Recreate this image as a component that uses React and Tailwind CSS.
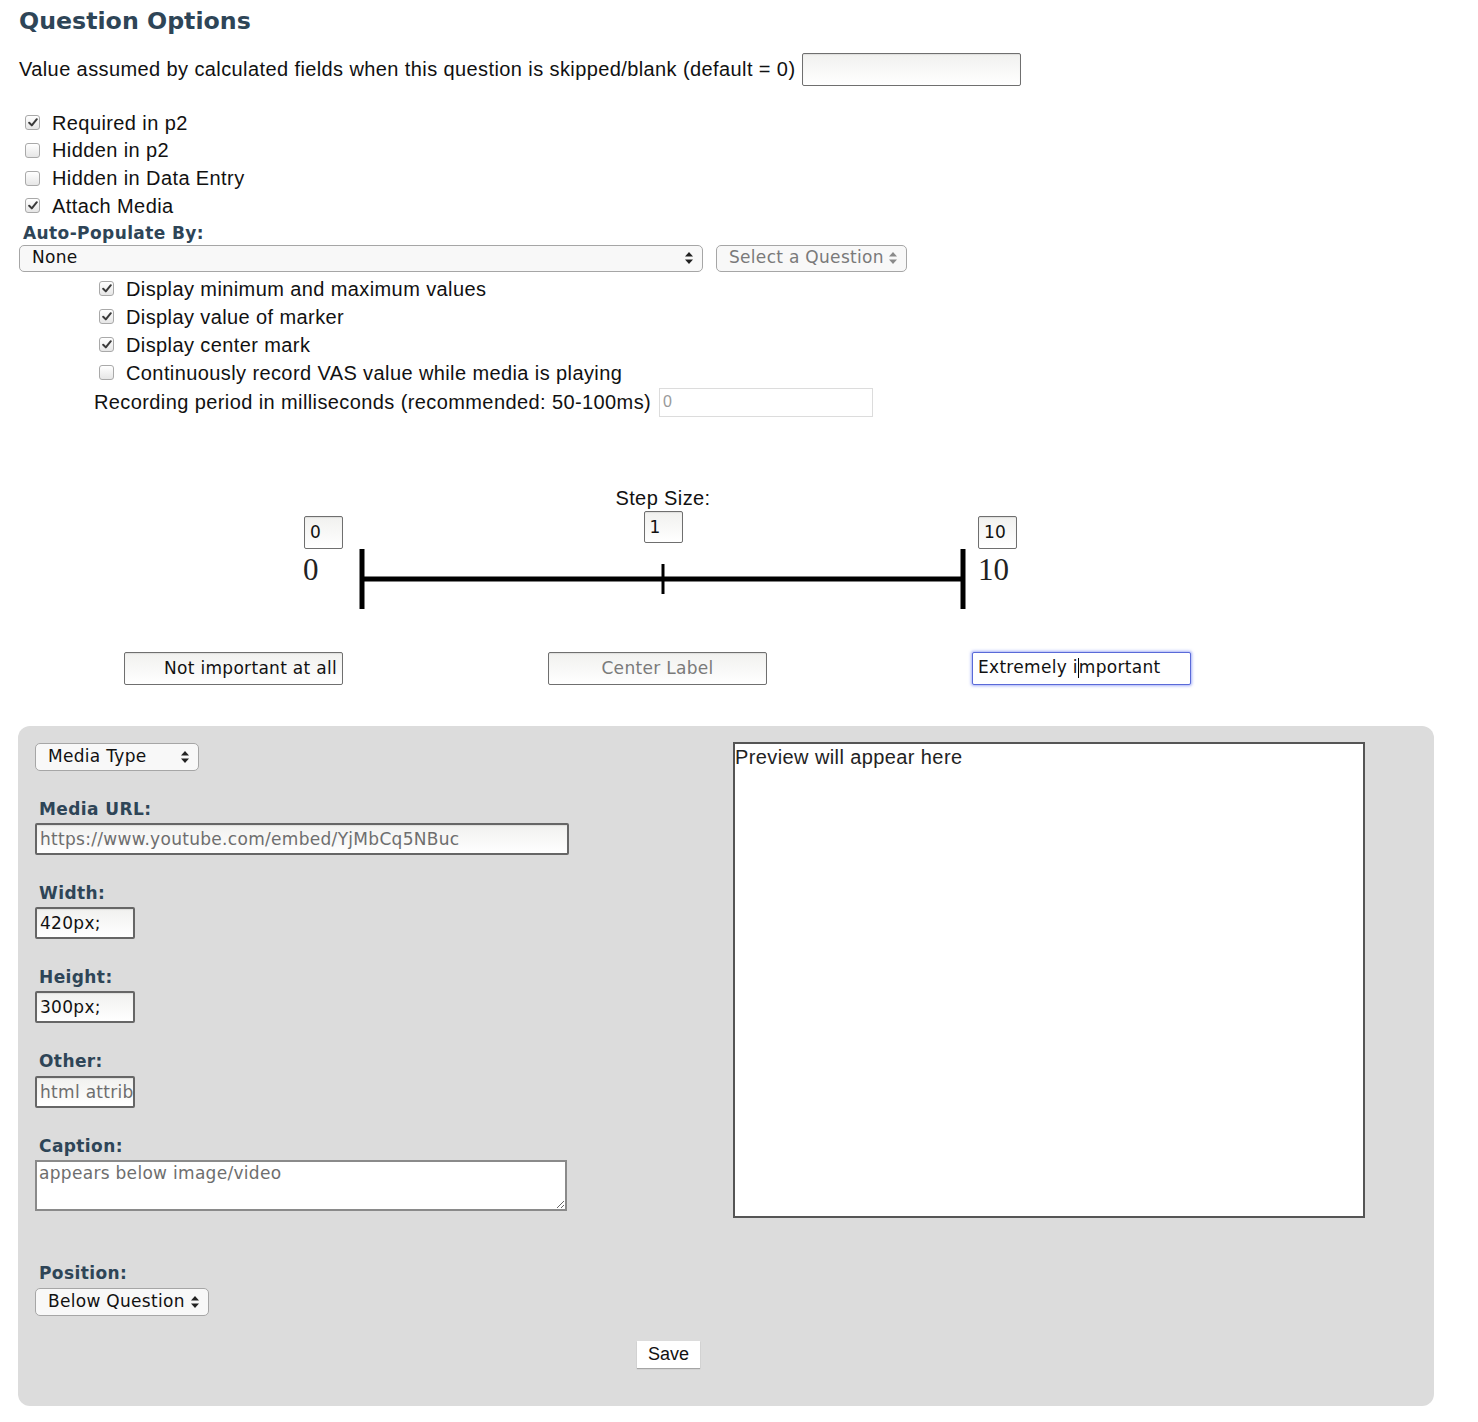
import React from "react";

const sans = "font-['Liberation_Sans',Arial,sans-serif] tracking-[0.4px]";
const ui = "font-['DejaVu_Sans',Verdana,sans-serif] text-[17px] tracking-[0.3px]";
const labelCls = "font-['DejaVu_Sans',Verdana,sans-serif] font-bold text-[17px] tracking-[0.4px] leading-[20px] text-[#2e4557]";

function Check({ on }) {
  return (
    <span className="w-[15px] h-[15px] shrink-0 rounded-[3px] border border-[#a9a9a9] bg-gradient-to-b from-white to-[#e6e6e6] flex items-center justify-center">
      {on && (
        <svg width="10" height="9" viewBox="0 0 10 9">
          <path d="M1.2 4.8 L3.8 7.4 L8.8 1.2" fill="none" stroke="#3a3a3a" strokeWidth="2" strokeLinecap="round" strokeLinejoin="round" />
        </svg>
      )}
    </span>
  );
}

function CheckRow({ on, tall = false, children }) {
  return (
    <div className={`${tall ? "h-[28px]" : "h-[27.67px]"} flex items-center gap-[12px]`}>
      <Check on={on} />
      <span className={`${sans} text-[20px] text-[#111]`}>{children}</span>
    </div>
  );
}

function Arrows({ color = "#222" }) {
  return (
    <svg width="8" height="14" viewBox="0 0 8 14" className="shrink-0">
      <path d="M0 5.5 L4 1 L8 5.5 Z" fill={color} />
      <path d="M0 8.5 L4 13 L8 8.5 Z" fill={color} />
    </svg>
  );
}

function Select({ value, className = "", muted = false }) {
  return (
    <div
      className={`flex items-center justify-between rounded-[5px] border border-[#a6a6a6] bg-[#f8f8f8] pl-[12px] pr-[9px] ${ui} ${muted ? "text-[#7a7a7a]" : "text-[#111]"} ${className}`}
    >
      <span>{value}</span>
      <Arrows color={muted ? "#8a8a8a" : "#222"} />
    </div>
  );
}

const boxCls =
  "border border-[#6f6f6f] rounded-[2px] bg-gradient-to-b from-[#f1f1ef] to-white shadow-[inset_0_1px_1px_rgba(0,0,0,0.08)] outline-none";
const numeral = "font-['Liberation_Serif','Times_New_Roman',serif] text-[31px] leading-[33px] text-[#222]";

export default function App() {
  return (
    <div className="bg-white min-h-[1422px] pl-[18px] pt-[4px] text-[#111]">
      <h2 className="font-['DejaVu_Sans',Verdana,sans-serif] font-bold text-[23.7px] leading-[34px] text-[#2e4557] ml-[1px]">
        Question Options
      </h2>

      <div className="mt-[15px] ml-[1px] flex items-center h-[32px]">
        <span className={`${sans} text-[20px]`}>
          Value assumed by calculated fields when this question is skipped/blank (default = 0)
        </span>
        <input readOnly className={`${boxCls} ml-[7px] w-[219px] h-[33px]`} />
      </div>

      <div className="mt-[24px] ml-[7px]">
        <CheckRow on>Required in p2</CheckRow>
        <CheckRow>Hidden in p2</CheckRow>
        <CheckRow>Hidden in Data Entry</CheckRow>
        <CheckRow on>Attach Media</CheckRow>
      </div>

      <div className={`${labelCls} mt-[3px] ml-[5px]`}>Auto-Populate By:</div>

      <div className="mt-[2px] ml-[1px] flex gap-[13px]">
        <Select value="None" className="w-[684px] h-[27px]" />
        <Select value="Select a Question" muted className="w-[191px] h-[27px]" />
      </div>

      <div className="mt-[3px] ml-[81px]">
        <CheckRow on tall>Display minimum and maximum values</CheckRow>
        <CheckRow on tall>Display value of marker</CheckRow>
        <CheckRow on tall>Display center mark</CheckRow>
        <CheckRow tall>Continuously record VAS value while media is playing</CheckRow>
      </div>

      <div className="mt-[1px] ml-[76px] flex items-center h-[29px]">
        <span className={`${sans} text-[20px]`}>Recording period in milliseconds (recommended: 50-100ms)</span>
        <input
          readOnly
          placeholder="0"
          className="ml-[8px] w-[214px] h-[29px] border border-[#dcdcdc] pl-[3px] font-['Liberation_Sans',Arial,sans-serif] text-[16px] placeholder:text-[#9a9a9a] outline-none"
        />
      </div>

      {/* scale editor */}
      <div className="mt-[69px] ml-[286px] w-[715px]">
        <div className="flex items-end">
          <input readOnly defaultValue="0" className={`${boxCls} w-[39px] h-[33px] pl-[5px] ${ui}`} />
          <div className="ml-[270px] w-[100px] flex flex-col items-center mb-[6px]">
            <span className={`${sans} text-[20px] leading-[24px]`}>Step Size:</span>
            <input readOnly defaultValue="1" className={`${boxCls} mt-[1px] w-[39px] h-[32px] pl-[5px] ${ui}`} />
          </div>
          <input readOnly defaultValue="10" className={`${boxCls} ml-[265px] w-[39px] h-[33px] pl-[5px] ${ui}`} />
        </div>
        <div className="flex items-start -ml-[1px]">
          <span className={`w-[56px] mt-[4px] ${numeral}`}>0</span>
          <svg width="607" height="60" viewBox="0 0 607 60" className="shrink-0">
            <line x1="3" y1="30" x2="604" y2="30" stroke="#000" strokeWidth="5" />
            <line x1="3" y1="0" x2="3" y2="60" stroke="#000" strokeWidth="5" />
            <line x1="604" y1="0" x2="604" y2="60" stroke="#000" strokeWidth="5" />
            <line x1="304" y1="15" x2="304" y2="45" stroke="#000" strokeWidth="3" />
          </svg>
          <span className={`ml-[12px] mt-[4px] ${numeral}`}>10</span>
        </div>
      </div>

      <div className={`mt-[43px] ml-[106px] flex gap-[205px] ${ui}`}>
        <input readOnly defaultValue="Not important at all" className={`${boxCls} w-[219px] h-[33px] text-right pr-[5px]`} />
        <input readOnly placeholder="Center Label" className={`${boxCls} w-[219px] h-[33px] text-center placeholder:text-[#7a7a7a]`} />
        <div className="w-[219px] h-[33px] flex items-center pl-[5px] border border-[#5a6ad8] rounded-[2px] bg-white shadow-[0_0_3px_1px_rgba(90,110,240,0.55)]">
          <span>Extremely i</span>
          <span className="w-px h-[20px] bg-black" />
          <span>mportant</span>
        </div>
      </div>

      {/* media panel */}
      <div className="mt-[41px] w-[1416px] h-[680px] bg-[#dcdcdc] rounded-[12px] pl-[17px] pt-[17px] flex">
        <div className="w-[698px] shrink-0 flex flex-col items-start">
          <Select value="Media Type" className="w-[164px] h-[28px]" />

          <div className={`${labelCls} mt-[28px] ml-[4px] mb-[4px]`}>Media URL:</div>
          <input
            readOnly
            placeholder="https://www.youtube.com/embed/YjMbCq5NBuc"
            className={`${boxCls} border-2 border-[#666] w-[534px] h-[32px] pl-[3px] ${ui} placeholder:text-[#6e6e6e]`}
          />

          <div className={`${labelCls} mt-[28px] ml-[4px] mb-[4px]`}>Width:</div>
          <input readOnly defaultValue="420px;" className={`${boxCls} border-2 border-[#666] w-[100px] h-[32px] pl-[3px] ${ui}`} />

          <div className={`${labelCls} mt-[28px] ml-[4px] mb-[4px]`}>Height:</div>
          <input readOnly defaultValue="300px;" className={`${boxCls} border-2 border-[#666] w-[100px] h-[32px] pl-[3px] ${ui}`} />

          <div className={`${labelCls} mt-[28px] ml-[4px] mb-[5px]`}>Other:</div>
          <input readOnly placeholder="html attributes" className={`${boxCls} border-2 border-[#666] w-[100px] h-[32px] pl-[3px] ${ui} placeholder:text-[#6e6e6e]`} />

          <div className={`${labelCls} mt-[28px] ml-[4px] mb-[4px]`}>Caption:</div>
          <textarea
            readOnly
            placeholder="appears below image/video"
            className={`w-[532px] h-[51px] border-2 border-[#8a8a8a] bg-white pl-[2px] pt-[1px] ${ui} leading-[20px] placeholder:text-[#6e6e6e] outline-none`}
          />

          <div className={`${labelCls} mt-[52px] ml-[4px] mb-[5px]`}>Position:</div>
          <Select value="Below Question" className="w-[174px] h-[28px]" />

          <button className={`mt-[25px] ml-[602px] w-[63px] h-[27px] bg-white shadow-[0_1px_1px_rgba(0,0,0,0.25)] font-['Liberation_Sans',Arial,sans-serif] text-[18px] text-[#111]`}>
            Save
          </button>
        </div>

        <div className={`-mt-[1px] w-[632px] h-[476px] border-2 border-[#555] bg-white ${sans} text-[20px] leading-[26px] text-[#222]`}>
          Preview will appear here
        </div>
      </div>
    </div>
  );
}
